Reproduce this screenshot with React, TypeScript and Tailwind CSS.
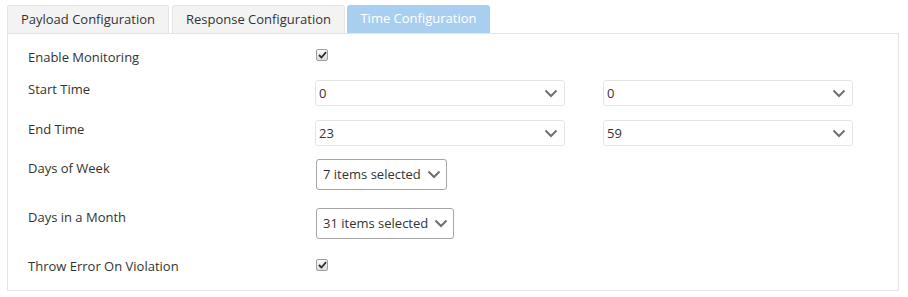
import React from 'react';

const tabs = [
  { label: 'Payload Configuration', width: 'w-[162px] mr-[3px]', active: false },
  { label: 'Response Configuration', width: 'w-[173px] mr-[2px]', active: false },
  { label: 'Time Configuration', width: 'w-[143px]', active: true },
];

function Chevron({ className }: { className?: string }) {
  return (
    <svg width="14" height="9" viewBox="0 0 14 9" className={className}>
      <path d="M1.5 1.5 L7 7 L12.5 1.5" fill="none" stroke="#6f6f6f" strokeWidth="2" />
    </svg>
  );
}

function Check() {
  return (
    <span className="mt-[1px] flex h-[12px] w-[12px] items-center justify-center rounded-[2px] border border-[#9e9e9e] bg-gradient-to-b from-[#fafafa] to-[#dcdcdc]">
      <svg width="9" height="8" viewBox="0 0 10 9">
        <path d="M1 4.5 L3.8 7.3 L9 1.3" fill="none" stroke="#2e2e2e" strokeWidth="2" />
      </svg>
    </span>
  );
}

function Select({ value }: { value: string }) {
  return (
    <div className="flex h-[26px] w-[250px] items-center justify-between rounded-[3px] border border-[#e4e4e4] pl-[3px] pr-[6px]">
      <span className="leading-none">{value}</span>
      <Chevron />
    </div>
  );
}

function MultiSelect({ text }: { text: string }) {
  return (
    <div className="flex h-[31px] items-center gap-[6px] rounded-[3px] border border-[#a6a6a6] pl-[6px] pr-[5px]">
      <span className="leading-none">{text}</span>
      <Chevron />
    </div>
  );
}

export default function App() {
  return (
    <div className="min-h-[297px] bg-white pl-[7px] pt-[5px] font-['Open_Sans',sans-serif] text-[13px] text-[#333]">
      <div className="flex h-[28px]">
        {tabs.map((t) => (
          <div
            key={t.label}
            className={
              t.active
                ? `${t.width} flex items-center justify-center rounded-t-[3px] bg-[#a9cff0] text-white`
                : `${t.width} flex items-center justify-center rounded-t-[3px] border border-b-0 border-[#e4e4e4] bg-[#f3f3f3] text-[#333]`
            }
          >
            {t.label}
          </div>
        ))}
      </div>
      <div className="h-[258px] w-[892px] border border-[#e4e4e4] pl-[20px] pt-[14px]">
        <div className="flex h-[32px] items-start">
          <div className="w-[287px] leading-[18px]">Enable Monitoring</div>
          <div className="pl-[1px]"><Check /></div>
        </div>
        <div className="flex h-[40px] items-start">
          <div className="w-[287px] leading-[18px]">Start Time</div>
          <div className="flex gap-[38px]">
            <Select value="0" />
            <Select value="0" />
          </div>
        </div>
        <div className="flex h-[39px] items-start">
          <div className="w-[287px] leading-[18px]">End Time</div>
          <div className="flex gap-[38px]">
            <Select value="23" />
            <Select value="59" />
          </div>
        </div>
        <div className="flex h-[49px] items-start">
          <div className="w-[288px] leading-[18px]">Days of Week</div>
          <MultiSelect text="7 items selected" />
        </div>
        <div className="flex h-[49px] items-start">
          <div className="w-[288px] leading-[18px]">Days in a Month</div>
          <MultiSelect text="31 items selected" />
        </div>
        <div className="flex h-[18px] items-start">
          <div className="w-[287px] leading-[18px]">Throw Error On Violation</div>
          <div className="pl-[1px] pt-[1px]"><Check /></div>
        </div>
      </div>
    </div>
  );
}
